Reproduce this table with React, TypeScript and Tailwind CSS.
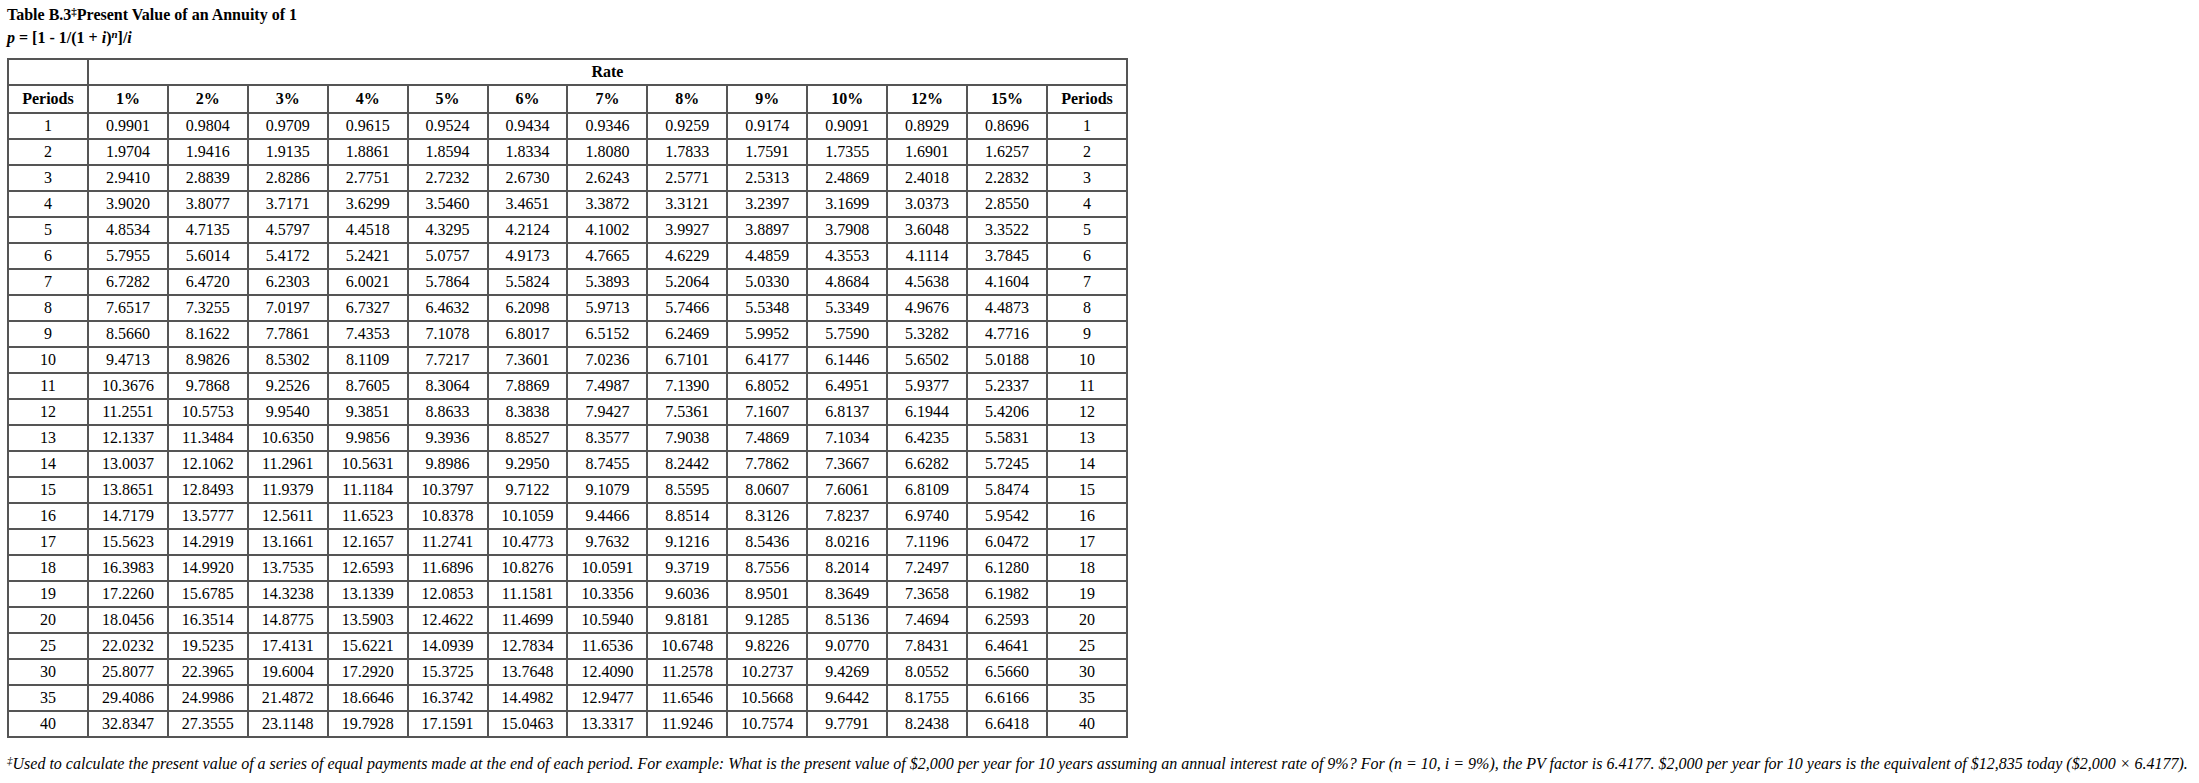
const rates = ["1%", "2%", "3%", "4%", "5%", "6%", "7%", "8%", "9%", "10%", "12%", "15%"];

// period, then one factor per rate column
const rows: [number, string[]][] = [
  [1, ["0.9901", "0.9804", "0.9709", "0.9615", "0.9524", "0.9434", "0.9346", "0.9259", "0.9174", "0.9091", "0.8929", "0.8696"]],
  [2, ["1.9704", "1.9416", "1.9135", "1.8861", "1.8594", "1.8334", "1.8080", "1.7833", "1.7591", "1.7355", "1.6901", "1.6257"]],
  [3, ["2.9410", "2.8839", "2.8286", "2.7751", "2.7232", "2.6730", "2.6243", "2.5771", "2.5313", "2.4869", "2.4018", "2.2832"]],
  [4, ["3.9020", "3.8077", "3.7171", "3.6299", "3.5460", "3.4651", "3.3872", "3.3121", "3.2397", "3.1699", "3.0373", "2.8550"]],
  [5, ["4.8534", "4.7135", "4.5797", "4.4518", "4.3295", "4.2124", "4.1002", "3.9927", "3.8897", "3.7908", "3.6048", "3.3522"]],
  [6, ["5.7955", "5.6014", "5.4172", "5.2421", "5.0757", "4.9173", "4.7665", "4.6229", "4.4859", "4.3553", "4.1114", "3.7845"]],
  [7, ["6.7282", "6.4720", "6.2303", "6.0021", "5.7864", "5.5824", "5.3893", "5.2064", "5.0330", "4.8684", "4.5638", "4.1604"]],
  [8, ["7.6517", "7.3255", "7.0197", "6.7327", "6.4632", "6.2098", "5.9713", "5.7466", "5.5348", "5.3349", "4.9676", "4.4873"]],
  [9, ["8.5660", "8.1622", "7.7861", "7.4353", "7.1078", "6.8017", "6.5152", "6.2469", "5.9952", "5.7590", "5.3282", "4.7716"]],
  [10, ["9.4713", "8.9826", "8.5302", "8.1109", "7.7217", "7.3601", "7.0236", "6.7101", "6.4177", "6.1446", "5.6502", "5.0188"]],
  [11, ["10.3676", "9.7868", "9.2526", "8.7605", "8.3064", "7.8869", "7.4987", "7.1390", "6.8052", "6.4951", "5.9377", "5.2337"]],
  [12, ["11.2551", "10.5753", "9.9540", "9.3851", "8.8633", "8.3838", "7.9427", "7.5361", "7.1607", "6.8137", "6.1944", "5.4206"]],
  [13, ["12.1337", "11.3484", "10.6350", "9.9856", "9.3936", "8.8527", "8.3577", "7.9038", "7.4869", "7.1034", "6.4235", "5.5831"]],
  [14, ["13.0037", "12.1062", "11.2961", "10.5631", "9.8986", "9.2950", "8.7455", "8.2442", "7.7862", "7.3667", "6.6282", "5.7245"]],
  [15, ["13.8651", "12.8493", "11.9379", "11.1184", "10.3797", "9.7122", "9.1079", "8.5595", "8.0607", "7.6061", "6.8109", "5.8474"]],
  [16, ["14.7179", "13.5777", "12.5611", "11.6523", "10.8378", "10.1059", "9.4466", "8.8514", "8.3126", "7.8237", "6.9740", "5.9542"]],
  [17, ["15.5623", "14.2919", "13.1661", "12.1657", "11.2741", "10.4773", "9.7632", "9.1216", "8.5436", "8.0216", "7.1196", "6.0472"]],
  [18, ["16.3983", "14.9920", "13.7535", "12.6593", "11.6896", "10.8276", "10.0591", "9.3719", "8.7556", "8.2014", "7.2497", "6.1280"]],
  [19, ["17.2260", "15.6785", "14.3238", "13.1339", "12.0853", "11.1581", "10.3356", "9.6036", "8.9501", "8.3649", "7.3658", "6.1982"]],
  [20, ["18.0456", "16.3514", "14.8775", "13.5903", "12.4622", "11.4699", "10.5940", "9.8181", "9.1285", "8.5136", "7.4694", "6.2593"]],
  [25, ["22.0232", "19.5235", "17.4131", "15.6221", "14.0939", "12.7834", "11.6536", "10.6748", "9.8226", "9.0770", "7.8431", "6.4641"]],
  [30, ["25.8077", "22.3965", "19.6004", "17.2920", "15.3725", "13.7648", "12.4090", "11.2578", "10.2737", "9.4269", "8.0552", "6.5660"]],
  [35, ["29.4086", "24.9986", "21.4872", "18.6646", "16.3742", "14.4982", "12.9477", "11.6546", "10.5668", "9.6442", "8.1755", "6.6166"]],
  [40, ["32.8347", "27.3555", "23.1148", "19.7928", "17.1591", "15.0463", "13.3317", "11.9246", "10.7574", "9.7791", "8.2438", "6.6418"]],
];

const cell = "border-2 border-[#555] p-0 text-center align-middle";

export default function App() {
  return (
    <div className="min-h-screen bg-white px-[7px] pt-[3px] font-['Liberation_Serif',serif] text-[16px] text-black">
      <p className="leading-[23px] font-bold">
        Table B.3<sup className="text-[11px]">‡</sup>Present Value of an Annuity of 1
      </p>
      <p className="leading-[23px] font-bold">
        <i>p</i> = [1 - 1/(1 + <i>i</i>)<sup className="text-[11px]"><i>n</i></sup>]/<i>i</i>
      </p>

      <table className="mt-[9px] w-[1121px] table-fixed border-collapse border-2 border-[#444]">
        <thead>
          <tr className="h-[25px]">
            <th className={cell}></th>
            <th className={`${cell} font-bold`} colSpan={13}>
              Rate
            </th>
          </tr>
          <tr className="h-[28px]">
            <th className={`${cell} font-bold`}>Periods</th>
            {rates.map((r) => (
              <th key={r} className={`${cell} font-bold`}>
                {r}
              </th>
            ))}
            <th className={`${cell} font-bold`}>Periods</th>
          </tr>
        </thead>
        <tbody>
          {rows.map(([n, vals]) => (
            <tr key={n} className="h-[26px]">
              <td className={cell}>{n}</td>
              {vals.map((v, i) => (
                <td key={i} className={cell}>
                  {v}
                </td>
              ))}
              <td className={cell}>{n}</td>
            </tr>
          ))}
        </tbody>
      </table>

      <p className="mt-[14px] leading-[23px] italic">
        <sup className="text-[11px]">‡</sup>Used to calculate the present value of a series of equal payments made at
        the end of each period. For example: What is the present value of $2,000 per year for 10 years assuming an
        annual interest rate of 9%? For (n = 10, i = 9%), the PV factor is 6.4177. $2,000 per year for 10 years is the
        equivalent of $12,835 today ($2,000 × 6.4177).
      </p>
    </div>
  );
}
